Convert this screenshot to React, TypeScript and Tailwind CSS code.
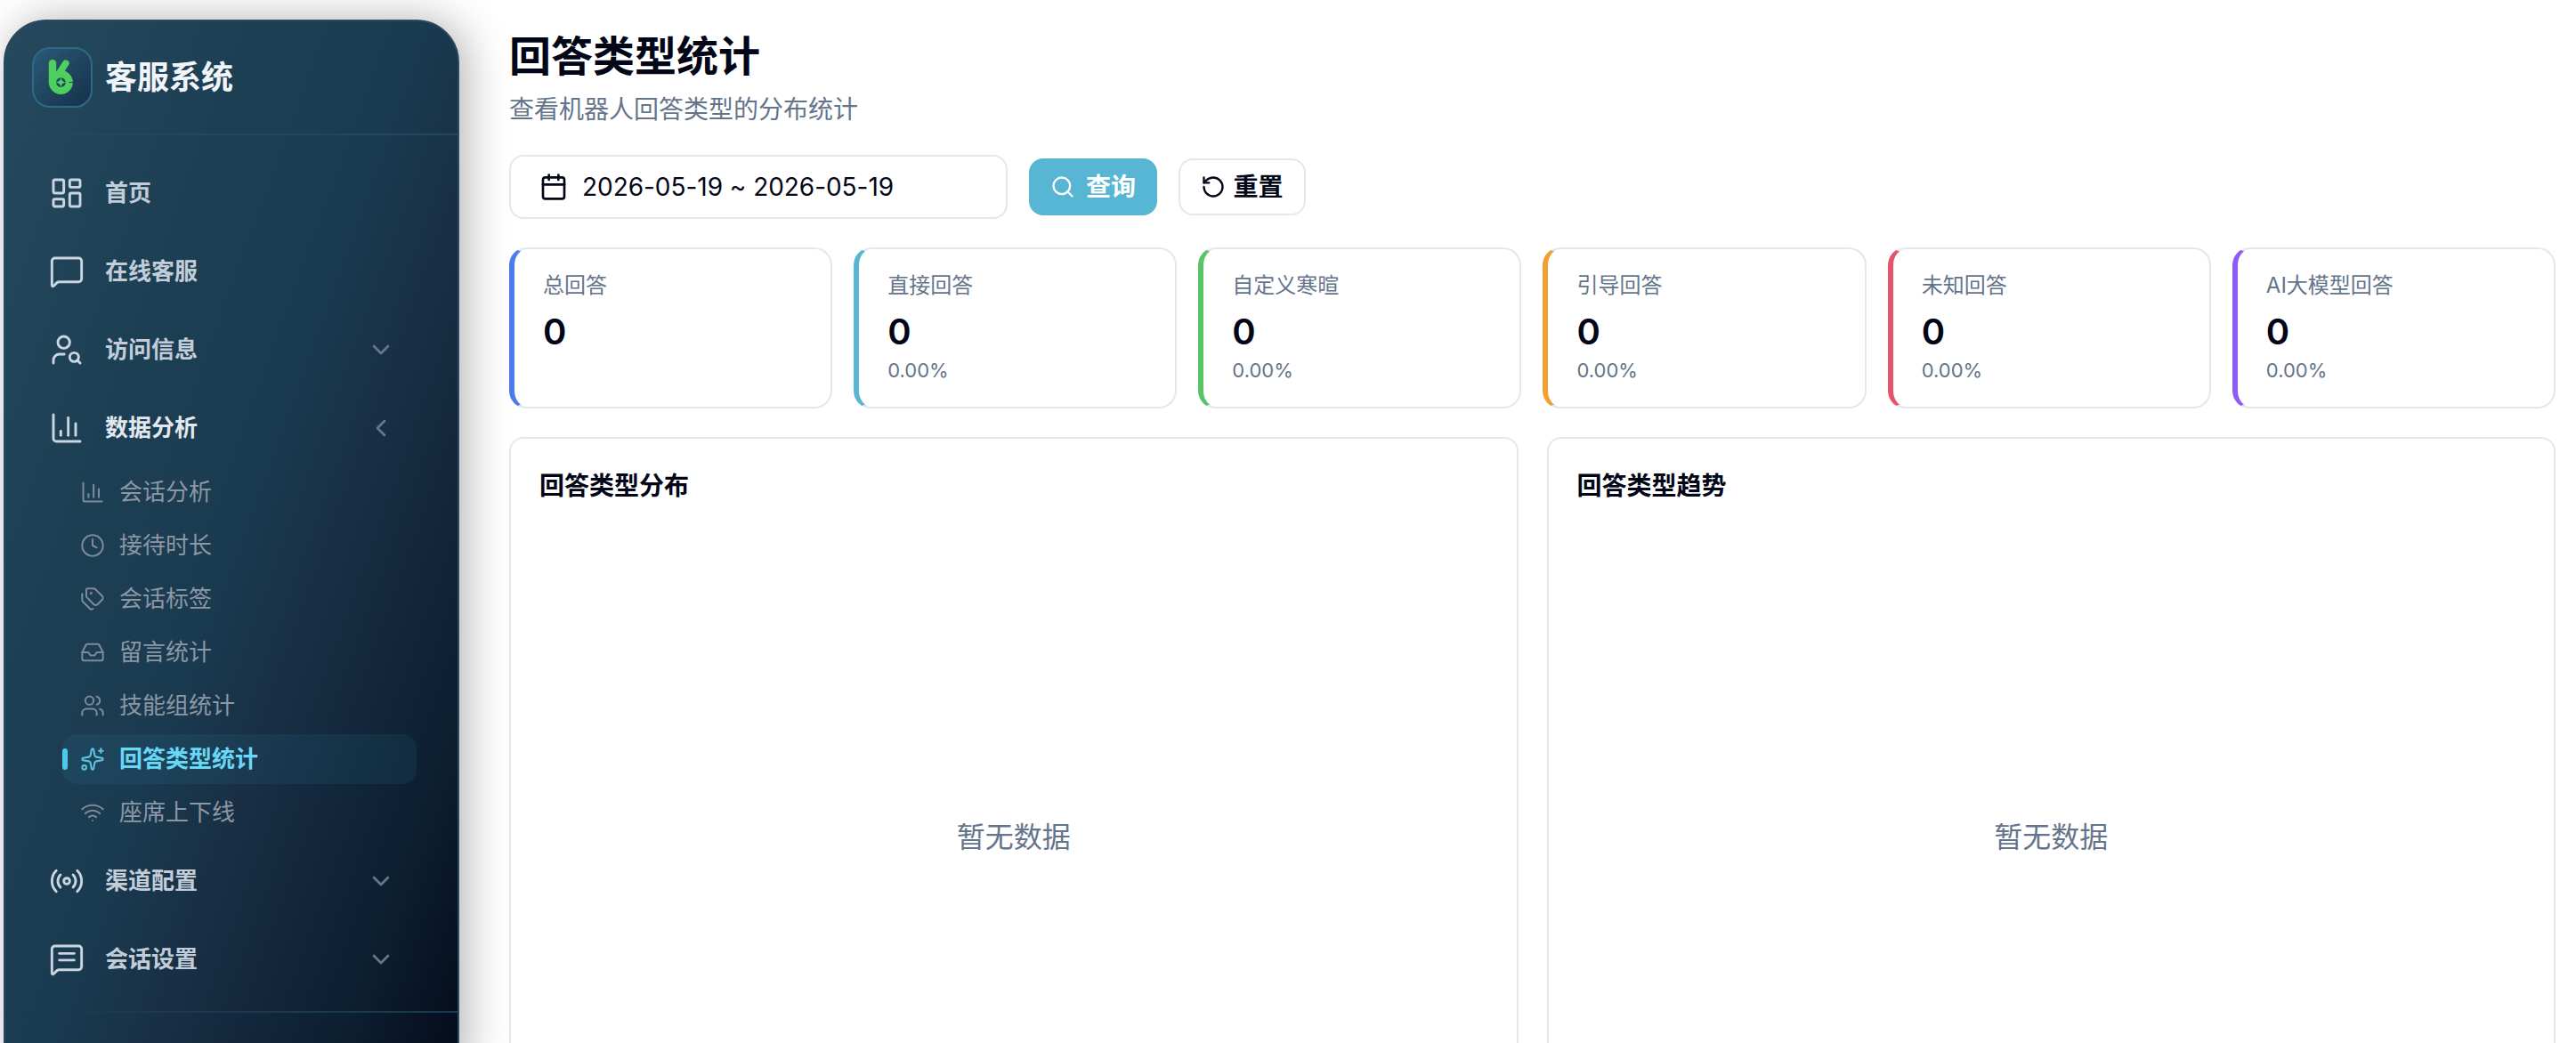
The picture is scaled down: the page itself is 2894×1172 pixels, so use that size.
import React from "react";
import {
  LayoutDashboard, MessageSquare, UserSearch, ChartColumn, ChevronDown, ChevronLeft, Clock, Tags, Inbox, Users,
  Sparkles, Wifi, Radio, Calendar, Search, RotateCcw,
} from "lucide-react";

const subItems = [
  { label: "会话分析", Icon: ChartColumn },
  { label: "接待时长", Icon: Clock },
  { label: "会话标签", Icon: Tags },
  { label: "留言统计", Icon: Inbox },
  { label: "技能组统计", Icon: Users },
  { label: "回答类型统计", Icon: Sparkles, active: true },
  { label: "座席上下线", Icon: Wifi },
];

const stats = [
  { label: "总回答", border: "border-l-[#4b7bec]" },
  { label: "直接回答", pct: "0.00%", border: "border-l-[#56b6d4]" },
  { label: "自定义寒暄", pct: "0.00%", border: "border-l-[#5ac469]" },
  { label: "引导回答", pct: "0.00%", border: "border-l-[#f0a030]" },
  { label: "未知回答", pct: "0.00%", border: "border-l-[#e4546a]" },
  { label: "AI大模型回答", pct: "0.00%", border: "border-l-[#8b5cf6]" },
];

function Logo() {
  return (
    <svg viewBox="0 0 210 210" className="h-[68px] w-[68px] shrink-0" fill="none">
      <circle cx="100" cy="122" r="29" stroke="#4fcf60" strokeWidth="25" />
      <path d="M71 56V124" stroke="#4fcf60" strokeWidth="26" strokeLinecap="round" />
      <path d="M117 56L95 90" stroke="#4fcf60" strokeWidth="23" strokeLinecap="round" />
      <path d="M100 106Q103 119 116 122Q103 125 100 138Q97 125 84 122Q97 119 100 106Z" fill="#4fcf60" />
      <path d="M128 122H144" stroke="#1f4259" strokeWidth="3" />
    </svg>
  );
}

function ChatLinesIcon({ size, strokeWidth, className }: { size?: number; strokeWidth?: number; className?: string }) {
  return (
    <svg
      viewBox="0 0 24 24"
      width={size}
      height={size}
      fill="none"
      stroke="currentColor"
      strokeWidth={strokeWidth}
      strokeLinecap="round"
      strokeLinejoin="round"
      className={className}
    >
      <path d="M22 17a2 2 0 0 1-2 2H6.828a2 2 0 0 0-1.414.586l-2.202 2.202A.71.71 0 0 1 2 21.286V5a2 2 0 0 1 2-2h16a2 2 0 0 1 2 2z" />
      <path d="M7 8h10" />
      <path d="M7 12.5h10" />
    </svg>
  );
}

function MainItem({ label, Icon, chevron, open }: { label: string; Icon: React.ElementType; chevron?: "down" | "left"; open?: boolean }) {
  return (
    <div className="flex h-[88px] items-center pl-[49px] pr-[70px]">
      <Icon size={40} strokeWidth={1.75} className="shrink-0 text-[#cbd5e1]" />
      <span className={`ml-[23px] flex-1 text-[26px] font-semibold leading-[40px] ${open ? "text-[#e2e8f0]" : "text-[#c3cdd9]"}`}>{label}</span>
      {chevron === "down" && <ChevronDown size={32} strokeWidth={2} className="text-[#6b7686]" />}
      {chevron === "left" && <ChevronLeft size={32} strokeWidth={2} className="text-[#6b7686]" />}
    </div>
  );
}

function StatCard({ label, pct, border }: { label: string; pct?: string; border: string }) {
  return (
    <div className={`h-[181px] rounded-[20px] border-2 border-l-[6px] border-[#e2e8f0] bg-white pl-8 pr-4 pt-[23px] ${border}`}>
      <div className="text-[24px] leading-[36px] text-[#64748b]">{label}</div>
      <div className="mt-1 text-[40px] font-semibold leading-[60px] text-[#020617]">0</div>
      {pct && <div className="mt-[-1px] text-[22px] leading-[28px] text-[#64748b]">{pct}</div>}
    </div>
  );
}

function ChartCard({ title }: { title: string }) {
  return (
    <div className="h-[900px] rounded-[16px] border-2 border-[#e2e8f0] bg-white px-8 pt-8">
      <div className="text-[28px] font-semibold leading-[42px] text-[#020617]">{title}</div>
      <div className="mt-[14px] flex h-[720px] items-center justify-center text-[32px] text-[#64748b]">暂无数据</div>
    </div>
  );
}

export default function App() {
  return (
    <div className="flex h-[1172px] w-[2894px] overflow-hidden bg-white font-[Inter,'Noto_Sans_CJK_SC',sans-serif]">
      <aside className="ml-1 mt-[22px] flex h-[1198px] w-[512px] shrink-0 flex-col rounded-[48px] border-2 border-[#2a4a63] bg-[linear-gradient(110deg,#27495e_0%,#1d3f54_30%,#1a3a4f_50%,#182f45_62%,#0c1e30_85%,#040a1a_100%)] shadow-[8px_0_48px_rgba(0,0,0,0.3)]">
        <div className="flex h-[128px] shrink-0 items-center border-b-2 border-[#23475e] pl-[30px]">
          <div className="flex h-[68px] w-[68px] shrink-0 items-center justify-center rounded-[20px] border-2 border-[#2e6a88] bg-[linear-gradient(135deg,#2b5a75,#16304a)]">
            <Logo />
          </div>
          <div className="ml-[14px] text-[36px] font-bold leading-[54px] text-[#f1f5f9]">客服系统</div>
        </div>
        <nav className="h-[984px] shrink-0 pt-[21px]">
          <MainItem label="首页" Icon={LayoutDashboard} />
          <MainItem label="在线客服" Icon={MessageSquare} />
          <MainItem label="访问信息" Icon={UserSearch} chevron="down" />
          <MainItem label="数据分析" Icon={ChartColumn} chevron="left" open />
          <div className="ml-[64px] mr-[46px] flex flex-col gap-1">
            {subItems.map(({ label, Icon, active }) => (
              <div key={label} className={`relative flex h-[56px] items-center gap-4 rounded-[16px] pl-5 ${active ? "bg-[rgba(76,201,234,0.07)]" : ""}`}>
                {active && <span className="absolute left-0 top-4 h-6 w-[6px] rounded-[3px] bg-[#4cc9ea]" />}
                <Icon size={28} strokeWidth={1.75} className={active ? "text-[#5cc4e0]" : "text-[#7d8a99]"} />
                <span className={`text-[26px] leading-[40px] ${active ? "font-semibold text-[#67d8f5]" : "text-[#8c97a5]"}`}>{label}</span>
              </div>
            ))}
          </div>
          <div className="mt-[5px]">
            <MainItem label="渠道配置" Icon={Radio} chevron="down" />
            <MainItem label="会话设置" Icon={ChatLinesIcon} chevron="down" />
          </div>
        </nav>
        <div className="border-t-2 border-[#1c3a4f]" />
      </aside>

      <main className="min-w-0 flex-1 pl-14 pr-[23px] pt-[27px]">
        <h1 className="text-[47px] font-bold leading-[72px] text-[#020617]">回答类型统计</h1>
        <p className="mt-[3px] text-[28px] leading-[42px] text-[#64748b]">查看机器人回答类型的分布统计</p>

        <div className="mt-[30px] flex h-[72px] items-center gap-6">
          <div className="flex h-[72px] w-[560px] items-center gap-4 rounded-[16px] border-2 border-[#e2e8f0] bg-white pl-[32px]">
            <Calendar size={32} strokeWidth={2} className="text-[#020617]" />
            <span className="text-[28px] leading-[42px] tracking-[-0.04px] text-[#020617]">2026-05-19 ~ 2026-05-19</span>
          </div>
          <button className="flex h-16 w-[144px] items-center justify-center gap-3 rounded-[16px] bg-[#56b6d4] text-[28px] font-semibold text-white">
            <Search size={28} strokeWidth={2} />
            查询
          </button>
          <button className="flex h-16 w-[143px] items-center justify-center gap-2 rounded-[16px] border-2 border-[#e2e8f0] bg-white text-[28px] font-semibold text-[#020617]">
            <RotateCcw size={28} strokeWidth={2} />
            重置
          </button>
        </div>

        <div className="mt-8 grid grid-cols-6 gap-6">
          {stats.map((s) => (
            <StatCard key={s.label} {...s} />
          ))}
        </div>

        <div className="mt-8 grid grid-cols-2 gap-8">
          <ChartCard title="回答类型分布" />
          <ChartCard title="回答类型趋势" />
        </div>
      </main>
    </div>
  );
}
